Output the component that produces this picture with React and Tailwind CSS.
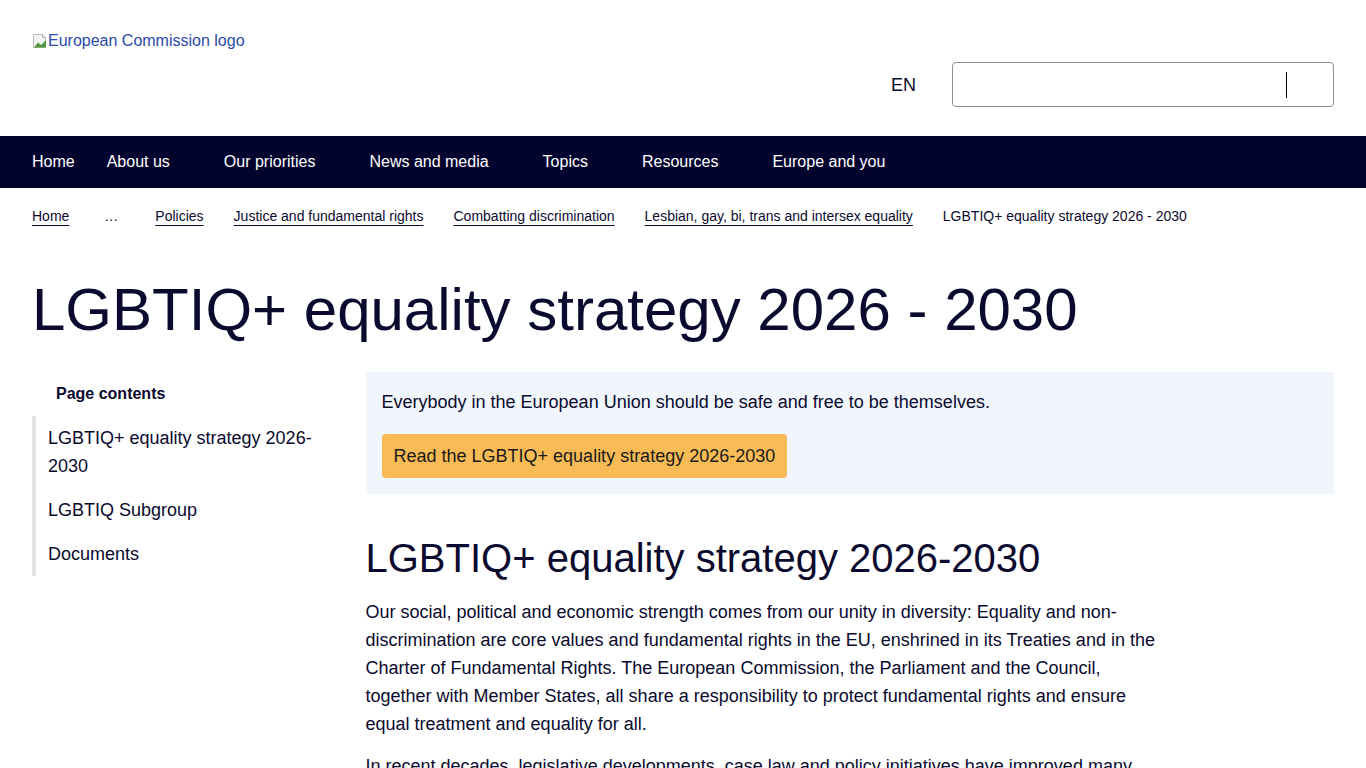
import React from 'react';

const navItems = ['About us', 'Our priorities', 'News and media', 'Topics', 'Resources', 'Europe and you'];

const crumbs = [
  'Policies',
  'Justice and fundamental rights',
  'Combatting discrimination',
  'Lesbian, gay, bi, trans and intersex equality',
];

const BrokenImage = () => (
  <svg width="16" height="16" viewBox="0 0 16 16" className="shrink-0">
    <path d="M1.5 1.5h9l3 3v10h-12z" fill="#f4f4f4" stroke="#b9b9b9" />
    <path d="M10.5 1.5v3h3" fill="none" stroke="#b9b9b9" />
    <path d="M2 14.5 L6 9.5 L9 12 L14 7 V14.5 Z" fill="#4f9a3e" />
  </svg>
);

const App = () => {
  return (
    <div className="min-h-screen bg-white text-[#0a0a2e] font-['Liberation_Sans',Arial,sans-serif]">
      {/* header */}
      <header className="h-[136px] px-8 flex justify-between">
        <a href="#" className="mt-8 flex items-start h-4 text-base leading-4 pt-px text-[#2a4aa8]">
          <BrokenImage />
          <span>European Commission logo</span>
        </a>
        <div className="flex items-center mt-[62px] self-start">
          <span className="text-lg mr-[36px] text-[#0a0a2e]">EN</span>
          <div className="w-[382px] h-[45px] border border-[#8b8b9a] rounded-[4px] flex items-center justify-end pr-[46px]">
            <span className="block w-px h-[26px] bg-black"></span>
          </div>
        </div>
      </header>

      {/* main nav */}
      <nav className="h-[52px] bg-[#03042e] px-8 flex items-center text-white text-base">
        <a href="#" className="mr-8">Home</a>
        {navItems.map((item) => (
          <a key={item} href="#" className="mr-[54px]">
            {item}
          </a>
        ))}
      </nav>

      {/* breadcrumb */}
      <div className="px-8 h-[58px] flex items-center text-sm pb-[2px]">
        <a href="#" className="underline underline-offset-[4px] mr-[35px]">Home</a>
        <span className="mr-[36px] tracking-[1px]">…</span>
        {crumbs.map((c) => (
          <a key={c} href="#" className="underline underline-offset-[4px] mr-[30px]">
            {c}
          </a>
        ))}
        <span>LGBTIQ+ equality strategy 2026 - 2030</span>
      </div>

      <div className="px-8">
        <h1 className="text-[60px] leading-[72px] pt-[28px] pb-[26px]">
          LGBTIQ+ equality strategy 2026 - 2030
        </h1>

        <div className="grid grid-cols-12 gap-x-8">
          {/* page contents */}
          <aside className="col-span-3">
            <h2 className="font-bold text-base pl-6 leading-5 mt-[12px] mb-[12px]">Page contents</h2>
            <ul className="border-l-4 border-[#e3e3e3] text-lg leading-7 pl-3 flex flex-col gap-4 py-2">
              <li>
                <a href="#">LGBTIQ+ equality strategy 2026-2030</a>
              </li>
              <li>
                <a href="#">LGBTIQ Subgroup</a>
              </li>
              <li>
                <a href="#">Documents</a>
              </li>
            </ul>
          </aside>

          {/* content */}
          <main className="col-span-9">
            <div className="bg-[#f1f6fd] p-4">
              <p className="text-lg leading-7">
                Everybody in the European Union should be safe and free to be themselves.
              </p>
              <a
                href="#"
                className="inline-block mt-[18px] bg-[#f8bb55] rounded-[4px] px-3 h-[44px] leading-[44px] text-lg text-[#1a1a1a]"
              >
                Read the LGBTIQ+ equality strategy 2026-2030
              </a>
            </div>

            <h2 className="text-[40px] leading-[48px] mt-[40px] mb-[16px]">
              LGBTIQ+ equality strategy 2026-2030
            </h2>
            <div className="max-w-[800px] text-lg leading-7">
              <p>
                Our social, political and economic strength comes from our unity in diversity: Equality and
                non-discrimination are core values and fundamental rights in the EU, enshrined in its Treaties and
                in the Charter of Fundamental Rights. The European Commission, the Parliament and the Council,
                together with Member States, all share a responsibility to protect fundamental rights and ensure
                equal treatment and equality for all.
              </p>
              <p className="mt-[14px]">
                In recent decades, legislative developments, case law and policy initiatives have improved many
                people's lives and helped us build more equal and welcoming societies, including for lesbian, gay,
                bisexual, trans, non-binary, intersex and queer people.
              </p>
            </div>
          </main>
        </div>
      </div>
    </div>
  );
};

export default App;
